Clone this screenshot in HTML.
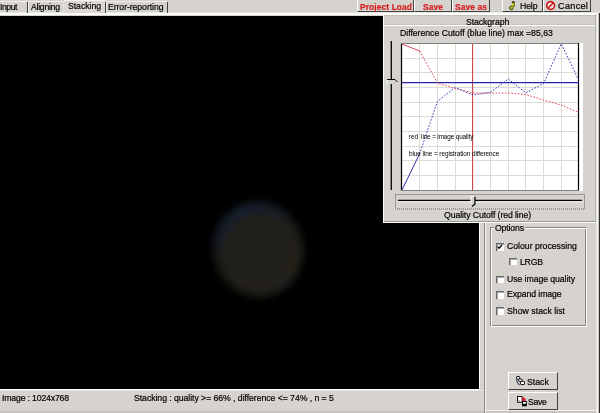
<!DOCTYPE html>
<html><head><meta charset="utf-8">
<style>
*{box-sizing:border-box;margin:0;padding:0}
html,body{width:600px;height:413px;overflow:hidden;background:#d6d3ce;position:relative;font-family:"Liberation Sans",sans-serif;color:#000}
.a{position:absolute}
.t{position:absolute;white-space:nowrap;line-height:1;will-change:transform;-webkit-text-stroke:0.2px currentColor}
</style></head><body>
<div class="a" style="left:0px;top:12px;width:600px;height:1px;background:#e6e5e2"></div>
<div class="a" style="left:0px;top:13px;width:600px;height:2px;background:#fcfcfb"></div>
<div class="a" style="left:64px;top:0px;width:41px;height:13px;background:#dbd8d3;border-top:1px solid #f4f3f1"></div>
<div class="a" style="left:0px;top:1px;width:27px;height:1px;background:#eeedea"></div>
<div class="a" style="left:28px;top:1px;width:36px;height:1px;background:#eeedea"></div>
<div class="a" style="left:28px;top:1px;width:1px;height:12px;background:#eeedea"></div>
<div class="a" style="left:63px;top:1px;width:1px;height:12px;background:#e6e4e0"></div>
<div class="a" style="left:106px;top:1px;width:61px;height:1px;background:#eeedea"></div>
<div class="a" style="left:106px;top:1px;width:1px;height:12px;background:#eeedea"></div>
<div class="a" style="left:27px;top:2px;width:1px;height:11px;background:#404040"></div>
<div class="a" style="left:105px;top:2px;width:1px;height:11px;background:#404040"></div>
<div class="a" style="left:167px;top:2px;width:1px;height:11px;background:#404040"></div>
<div class="a" style="left:357px;top:0px;width:57px;height:12px;border-bottom:1px solid #404040;border-right:1px solid #404040;border-left:1px solid #fff"></div>
<div class="a" style="left:414px;top:0px;width:38px;height:12px;border-bottom:1px solid #404040;border-right:1px solid #404040;border-left:1px solid #fff"></div>
<div class="a" style="left:452px;top:0px;width:38px;height:12px;border-bottom:1px solid #404040;border-right:1px solid #404040;border-left:1px solid #fff"></div>
<div class="a" style="left:502px;top:0px;width:41px;height:12px;border-bottom:1px solid #404040;border-right:1px solid #404040;border-left:1px solid #fff"></div>
<div class="a" style="left:543px;top:0px;width:48px;height:12px;border-bottom:1px solid #404040;border-right:1px solid #404040;border-left:1px solid #fff"></div>
<div class="a" style="left:0px;top:16px;width:479px;height:373px;background:#000"></div>
<svg class="a" style="left:170px;top:160px" width="180" height="180" viewBox="170 160 180 180">
<defs>
<filter id="bl" x="-30%" y="-30%" width="160%" height="160%" color-interpolation-filters="sRGB"><feGaussianBlur stdDeviation="4"/></filter>
<filter id="bl2" x="-30%" y="-30%" width="160%" height="160%" color-interpolation-filters="sRGB"><feGaussianBlur stdDeviation="5"/></filter>
<linearGradient id="ul" x1="0.25" y1="0" x2="0.75" y2="1"><stop offset="0.05" stop-color="#102038" stop-opacity="0.9"/><stop offset="0.45" stop-color="#102038" stop-opacity="0"/></linearGradient>
<linearGradient id="lr" x1="0" y1="0" x2="1" y2="1"><stop offset="0.55" stop-color="#2c2c1c" stop-opacity="0"/><stop offset="0.9" stop-color="#2c2c1c" stop-opacity="0.5"/></linearGradient>
</defs>
<g filter="url(#bl)">
<ellipse cx="258.5" cy="250" rx="44" ry="46" fill="#211f19"/>
<circle cx="283" cy="281" r="5" fill="#20203a" opacity="0.6"/>
</g>
<g filter="url(#bl2)">
<ellipse cx="258.5" cy="250" rx="40" ry="42" fill="none" stroke="url(#ul)" stroke-width="9"/>
<ellipse cx="258.5" cy="250" rx="40" ry="42" fill="none" stroke="url(#lr)" stroke-width="7"/>
</g>
</svg>
<div class="a" style="left:479px;top:16px;width:1px;height:374px;background:#fff"></div>
<div class="a" style="left:0px;top:389px;width:480px;height:1px;background:#fff"></div>
<div class="a" style="left:0px;top:390px;width:484px;height:1px;background:#e9e8e5"></div>
<div class="a" style="left:0px;top:411px;width:600px;height:2px;background:#c8c5bf"></div>
<div class="a" style="left:484px;top:16px;width:1px;height:397px;background:#8a8884"></div>
<div class="a" style="left:485px;top:16px;width:1px;height:397px;background:#f4f3f0"></div>
<div class="a" style="left:596px;top:13px;width:1px;height:400px;background:#e8e6e2"></div>
<div class="a" style="left:597px;top:13px;width:1px;height:400px;background:#f6f5f3"></div>
<div class="a" style="left:598px;top:13px;width:1px;height:400px;background:#c4c2be"></div>
<div class="a" style="left:599px;top:13px;width:1px;height:400px;background:#303030"></div>
<div class="a" style="left:485px;top:410px;width:112px;height:1px;background:#f0efec"></div>
<div class="a" style="left:383px;top:14px;width:213px;height:209px;background:#d6d3ce;border-left:1px solid #fff;border-top:1px solid #fff;border-right:1px solid #b4b2ac;border-bottom:1px solid #fff;box-shadow:inset 0 -1px 0 #9a9893"></div>
<div class="a" style="left:384px;top:15px;width:211px;height:1px;background:#c4c1bb"></div>
<div class="a" style="left:384px;top:16px;width:211px;height:8px;background:#d3d0cb"></div>
<div class="a" style="left:384px;top:24px;width:211px;height:1px;background:#c6c3bd"></div>
<div class="a" style="left:384px;top:25px;width:211px;height:1px;background:#fff"></div>
<svg class="a" style="left:0;top:0" width="600" height="413" viewBox="0 0 600 413">
<rect x="401" y="43" width="182" height="148" fill="#fff"/>
<g stroke="#dcdcd6" stroke-width="1" shape-rendering="crispEdges"><line x1="419.7" y1="44" x2="419.7" y2="190"/><line x1="437.4" y1="44" x2="437.4" y2="190"/><line x1="455.1" y1="44" x2="455.1" y2="190"/><line x1="472.8" y1="44" x2="472.8" y2="190"/><line x1="490.5" y1="44" x2="490.5" y2="190"/><line x1="508.2" y1="44" x2="508.2" y2="190"/><line x1="525.9" y1="44" x2="525.9" y2="190"/><line x1="543.6" y1="44" x2="543.6" y2="190"/><line x1="561.3" y1="44" x2="561.3" y2="190"/><line x1="402" y1="58.2" x2="579" y2="58.2"/><line x1="402" y1="72.8" x2="579" y2="72.8"/><line x1="402" y1="87.5" x2="579" y2="87.5"/><line x1="402" y1="102.2" x2="579" y2="102.2"/><line x1="402" y1="116.8" x2="579" y2="116.8"/><line x1="402" y1="131.5" x2="579" y2="131.5"/><line x1="402" y1="146.2" x2="579" y2="146.2"/><line x1="402" y1="160.9" x2="579" y2="160.9"/><line x1="402" y1="175.5" x2="579" y2="175.5"/></g>
<line x1="401.5" y1="43" x2="401.5" y2="191" stroke="#000" stroke-width="1.2"/>
<line x1="401" y1="43.5" x2="579" y2="43.5" stroke="#808080" stroke-width="1"/>
<line x1="578.5" y1="43" x2="578.5" y2="191" stroke="#000" stroke-width="1.2"/>
<line x1="401" y1="190.5" x2="579" y2="190.5" stroke="#808080" stroke-width="1"/>
<line x1="472.6" y1="44" x2="472.6" y2="190" stroke="#c83838" stroke-width="1"/>
<line x1="402" y1="82.7" x2="579" y2="82.7" stroke="#2424a0" stroke-width="1.2"/>
<line x1="402" y1="44" x2="419.7" y2="51" stroke="#e04858" stroke-width="1"/>
<polyline points="419.7,51 437.4,83 455.1,88.5 472.8,93 490.5,93 508.2,93 525.9,94.6 543.6,100 561.3,105 579,112.6" fill="none" stroke="#e04858" stroke-width="1" stroke-dasharray="1.6 1.6"/>
<line x1="402" y1="190" x2="419.5" y2="154" stroke="#3030a8" stroke-width="1"/>
<polyline points="419.5,154 437.4,101.5 455.1,87.4 472.8,95 490.5,92.3 508.2,79 525.9,92.8 543.6,83.5 561.3,43.8 578.5,79.7" fill="none" stroke="#3434b4" stroke-width="1" stroke-dasharray="1.6 1.6"/>
<line x1="391.3" y1="41" x2="391.3" y2="190" stroke="#000" stroke-width="1.3"/>
<path d="M387,79.5 L395,79.5 L397.5,82 L395,84 L387,84 Z" fill="#d0d0d0" stroke="none"/>
<path d="M387,84 L387,79.5 L395,79.5" fill="none" stroke="#fff" stroke-width="1"/>
<path d="M387,79.5 L395,79.5 L397.5,82" fill="none" stroke="#000" stroke-width="1"/>
<rect x="395.5" y="194.5" width="189" height="14.5" fill="none" stroke="#606060" stroke-width="1" stroke-dasharray="1 1"/>
<line x1="398" y1="200.5" x2="582" y2="200.5" stroke="#000" stroke-width="1.3"/>
<line x1="398" y1="201.8" x2="582" y2="201.8" stroke="#fff" stroke-width="1"/>
<path d="M471,196.5 L475,196.5 L475,204 L472.5,206.5 L471,204 Z" fill="#d0d0d0"/>
<path d="M471,204 L471,196.5 L475,196.5" fill="none" stroke="#fff" stroke-width="1"/>
<path d="M475,196.5 L475,204 L472,206.5" fill="none" stroke="#000" stroke-width="1.2"/>
</svg>
<div class="a" style="left:490px;top:227px;width:97px;height:100px;border-top:1px solid #8a8884;border-left:1px solid #8a8884;border-right:1px solid #fff;border-bottom:1px solid #fff;box-shadow:inset 1px 1px 0 #fff, inset -1px -1px 0 #8a8884"></div>
<div class="a" style="left:494px;top:224px;width:31px;height:8px;background:#d6d3ce"></div>
<div class="a" style="left:496px;top:243.2px;width:7.5px;height:7.5px;background:#fff;border-top:1px solid #6a6a6a;border-left:1px solid #6a6a6a;box-shadow:inset 1px 1px 0 #a8a8a8"></div><svg class="a" style="left:496px;top:243.2px" width="8" height="8" viewBox="0 0 8 8"><path d="M1.8,3.6 L3.1,5.2 L6,2" fill="none" stroke="#000" stroke-width="1.3"/></svg><div class="a" style="left:509px;top:257.8px;width:7.5px;height:7.5px;background:#fff;border-top:1px solid #6a6a6a;border-left:1px solid #6a6a6a;box-shadow:inset 1px 1px 0 #a8a8a8"></div><div class="a" style="left:496px;top:275.8px;width:7.5px;height:7.5px;background:#fff;border-top:1px solid #6a6a6a;border-left:1px solid #6a6a6a;box-shadow:inset 1px 1px 0 #a8a8a8"></div><div class="a" style="left:496px;top:291px;width:7.5px;height:7.5px;background:#fff;border-top:1px solid #6a6a6a;border-left:1px solid #6a6a6a;box-shadow:inset 1px 1px 0 #a8a8a8"></div><div class="a" style="left:496px;top:307px;width:7.5px;height:7.5px;background:#fff;border-top:1px solid #6a6a6a;border-left:1px solid #6a6a6a;box-shadow:inset 1px 1px 0 #a8a8a8"></div>
<div class="a" style="left:508px;top:372px;width:50px;height:18px;border-top:1px solid #fff;border-left:1px solid #fff;border-right:1px solid #404040;border-bottom:1px solid #404040"></div>
<div class="a" style="left:508px;top:392px;width:50px;height:18px;border-top:1px solid #fff;border-left:1px solid #fff;border-right:1px solid #404040;border-bottom:1px solid #404040"></div>
<svg class="a" style="left:504px;top:0" width="14" height="12" viewBox="0 0 14 12">
<ellipse cx="9.3" cy="2.3" rx="1.4" ry="1.3" fill="#3a3a12"/>
<ellipse cx="9.1" cy="5" rx="1.7" ry="2.1" fill="#c4cc20"/>
<path d="M10.6,3.6 Q11,5.5 9.6,7" fill="none" stroke="#3a3a12" stroke-width="0.9"/>
<ellipse cx="7.4" cy="7.9" rx="1.7" ry="1.8" fill="#a8b820" stroke="#2e3010" stroke-width="1"/>
<ellipse cx="8" cy="7.6" rx="0.8" ry="1" fill="#d8e040"/>
</svg>
<svg class="a" style="left:545px;top:0" width="12" height="12" viewBox="0 0 12 12">
<circle cx="5.6" cy="5.5" r="3.9" fill="#f4e8e8" stroke="#c41818" stroke-width="1.6"/>
<line x1="3" y1="8.2" x2="8.3" y2="2.8" stroke="#d01818" stroke-width="1.5"/>
</svg>
<svg class="a" style="left:513px;top:374px" width="16" height="14" viewBox="513 374 16 14">
<rect x="516.5" y="376.5" width="3.2" height="2.6" rx="0.6" fill="#fff" stroke="#101010" stroke-width="1"/>
<rect x="518.7" y="379" width="3.4" height="2.5" rx="0.6" fill="#fff" stroke="#101010" stroke-width="1"/>
<rect x="520.5" y="381.3" width="4" height="3.2" rx="0.6" fill="#fff" stroke="#101010" stroke-width="1"/>
<path d="M516.8,379.2 L517,381.5 L518.8,384.6" fill="none" stroke="#1a1a50" stroke-width="1"/>
<circle cx="519" cy="384.6" r="0.7" fill="#2a2a80"/>
</svg>
<svg class="a" style="left:513px;top:393px" width="16" height="15" viewBox="513 393 16 15">
<rect x="517.5" y="396.5" width="4.6" height="5.8" fill="#fff" stroke="#101010" stroke-width="1"/>
<path d="M518.6,400 L520,401.3" stroke="#606080" stroke-width="0.9"/>
<path d="M522.2,397.2 Q524.8,396.8 525.6,399 L525.6,401 L522.2,401 Z" fill="#e01838"/>
<rect x="522.5" y="401.5" width="3.8" height="4.3" fill="#fff" stroke="#080808" stroke-width="1"/>
<rect x="522.5" y="403.8" width="3.8" height="2" fill="#080808"/>
</svg>
</svg>
<div class="t" style="left:-0.20px;top:3px;font-size:8.7px;letter-spacing:-0.482px;">Input</div>
<div class="t" style="left:30.50px;top:3px;font-size:8.7px;letter-spacing:-0.275px;">Aligning</div>
<div class="t" style="left:67.50px;top:2px;font-size:8.7px;letter-spacing:-0.047px;">Stacking</div>
<div class="t" style="left:108.00px;top:3px;font-size:8.7px;letter-spacing:-0.071px;">Error-reporting</div>
<div class="t" style="left:359.50px;top:3px;font-size:8.4px;letter-spacing:0.115px;font-weight:bold;color:#d42020">Project Load</div>
<div class="t" style="left:423.00px;top:3px;font-size:8.4px;letter-spacing:0.146px;font-weight:bold;color:#d42020">Save</div>
<div class="t" style="left:454.50px;top:3px;font-size:8.4px;letter-spacing:0.133px;font-weight:bold;color:#d42020">Save as</div>
<div class="t" style="left:519.50px;top:2px;font-size:8.7px;letter-spacing:-0.125px;">Help</div>
<div class="t" style="left:557.80px;top:2px;font-size:9.2px;letter-spacing:0.258px;">Cancel</div>
<div class="t" style="left:466.20px;top:18px;font-size:8.7px;letter-spacing:-0.073px;">Stackgraph</div>
<div class="t" style="left:400.10px;top:29px;font-size:8.7px;letter-spacing:-0.018px;">Difference Cutoff (blue line) max =85,63</div>
<div class="t" style="left:408.50px;top:134px;font-size:6.4px;letter-spacing:-0.137px;-webkit-text-stroke:0">red&nbsp; line = image quality</div>
<div class="t" style="left:408.50px;top:151px;font-size:6.4px;letter-spacing:-0.063px;-webkit-text-stroke:0">blue line = registration difference</div>
<div class="t" style="left:443.70px;top:211px;font-size:8.7px;letter-spacing:-0.086px;">Quality Cutoff (red line)</div>
<div class="t" style="left:494.50px;top:224px;font-size:8.7px;letter-spacing:-0.159px;">Options</div>
<div class="t" style="left:506.90px;top:242px;font-size:8.7px;letter-spacing:-0.014px;">Colour processing</div>
<div class="t" style="left:519.50px;top:258px;font-size:8.7px;letter-spacing:-0.224px;">LRGB</div>
<div class="t" style="left:506.80px;top:275px;font-size:8.7px;letter-spacing:-0.066px;">Use image quality</div>
<div class="t" style="left:506.80px;top:290px;font-size:8.7px;letter-spacing:-0.077px;">Expand image</div>
<div class="t" style="left:506.80px;top:307px;font-size:8.7px;letter-spacing:0.039px;">Show stack list</div>
<div class="t" style="left:2.40px;top:394px;font-size:8.7px;letter-spacing:-0.164px;">Image : 1024x768</div>
<div class="t" style="left:134.20px;top:394px;font-size:8.7px;letter-spacing:-0.051px;">Stacking : quality &gt;= 66% , difference &lt;= 74% , n = 5</div>
<div class="t" style="left:527.40px;top:378px;font-size:8.7px;letter-spacing:0.016px;">Stack</div>
<div class="t" style="left:528.40px;top:398px;font-size:8.7px;letter-spacing:-0.337px;">Save</div>
</body></html>
